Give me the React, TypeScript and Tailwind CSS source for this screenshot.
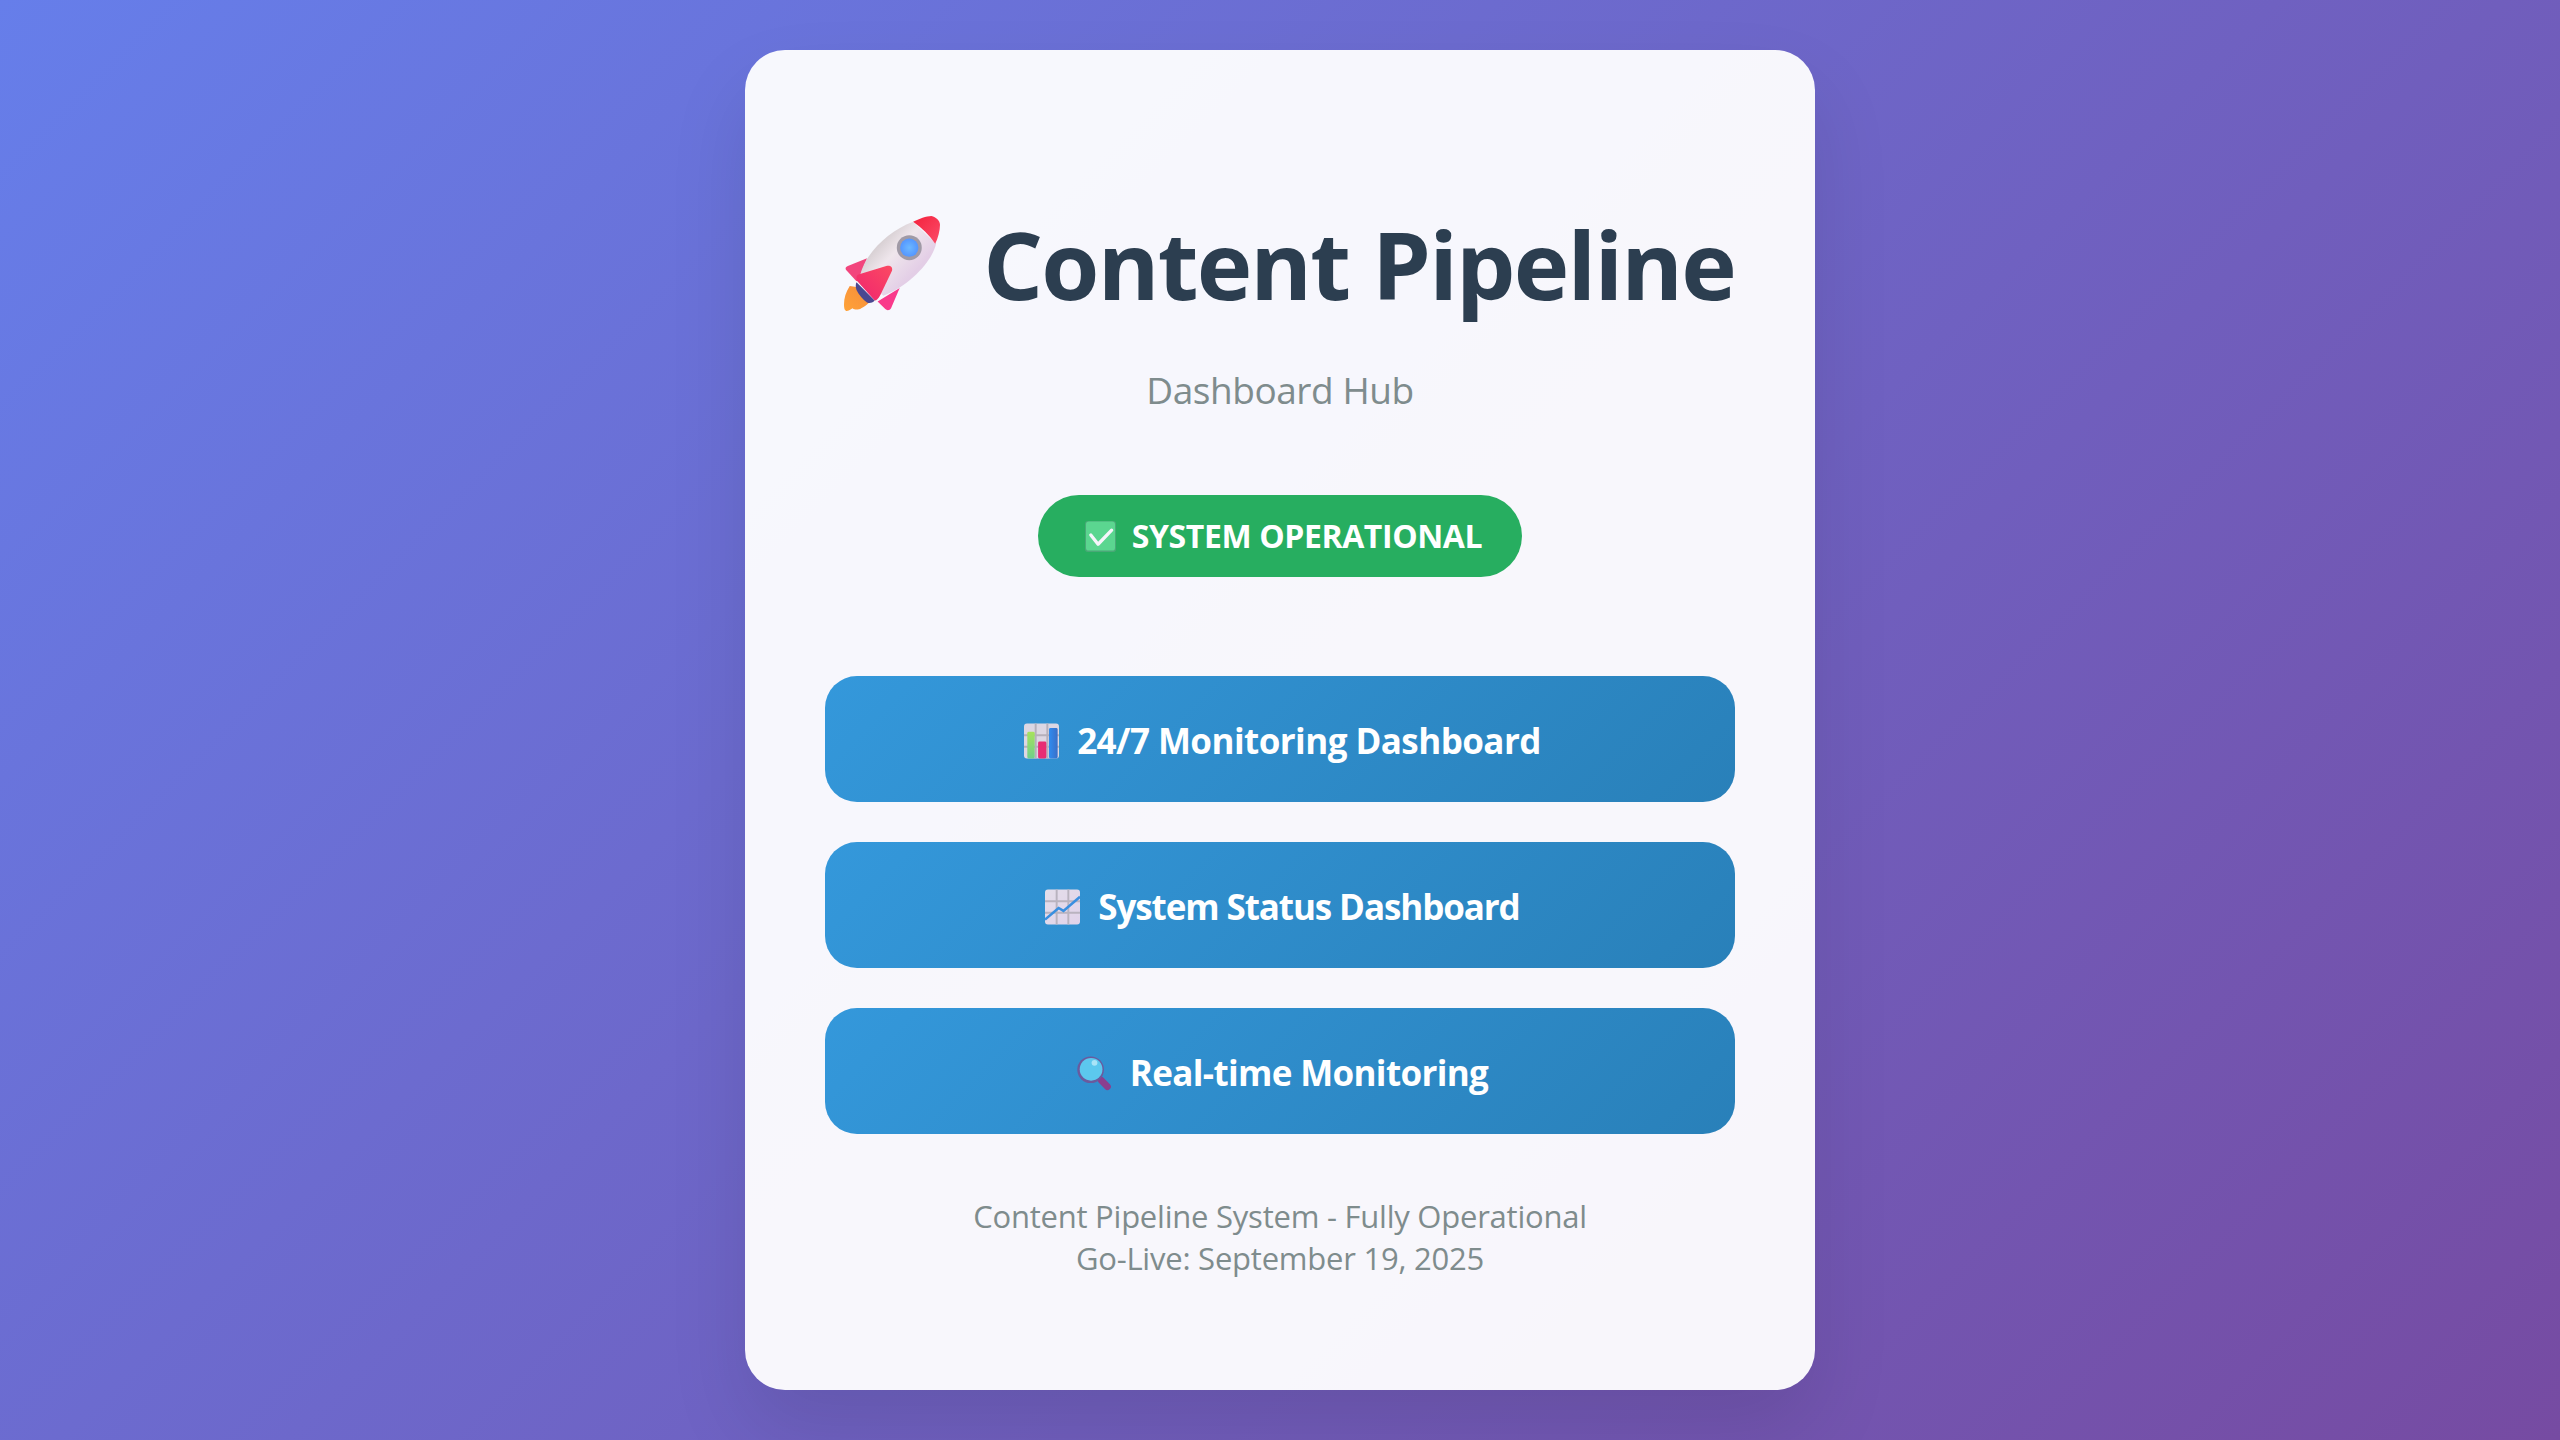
import React from 'react';

const font = "font-['Open_Sans','Noto_Sans',sans-serif]";

const Rocket = () => (
	<svg viewBox="0 0 100 100" className="w-[96px] h-[96px] shrink-0">
		<defs>
			<linearGradient id="rocketBody" x1="0.1" y1="0.25" x2="0.65" y2="0.75">
				<stop offset="0" stopColor="#c9c2c4" />
				<stop offset="0.5" stopColor="#efe6ec" />
				<stop offset="1" stopColor="#e3cee6" />
			</linearGradient>
			<linearGradient id="rocketTip" x1="0" y1="0" x2="1" y2="1">
				<stop offset="0" stopColor="#f4213c" />
				<stop offset="1" stopColor="#fb4d6a" />
			</linearGradient>
			<linearGradient id="rocketFin" x1="0" y1="1" x2="1" y2="0">
				<stop offset="0" stopColor="#f0246f" />
				<stop offset="1" stopColor="#fb4a62" />
			</linearGradient>
			<linearGradient id="rocketFlame" x1="0" y1="1" x2="1" y2="0">
				<stop offset="0" stopColor="#ffa338" />
				<stop offset="1" stopColor="#f58c3c" />
			</linearGradient>
			<radialGradient id="rocketGlass" cx="0.5" cy="0.5" r="0.6">
				<stop offset="0" stopColor="#6cb8ff" />
				<stop offset="1" stopColor="#4f8fff" />
			</radialGradient>
		</defs>
		<path d="M6 73C2 79 0 86 0 92C0 97 1 99 3 99C6 98 7 97 9 96C11 98 15 98 18 96C22 94 25 92 28 88L13 74Z" fill="url(#rocketFlame)" />
		<path d="M4 52L24 44L17 62L13 68L2 56C1 54 2 53 4 52Z" fill="#f2457d" />
		<path d="M58 75L49 96C48 98 45 99 43 97L35 89Z" fill="#f93a8b" />
		<path d="M13 69L32 88C29 91 26 91 24 90C20 87 16 83 13 77C12 74 12 71 13 69Z" fill="#4a4891" />
		<path d="M17 61C22 40 45 16 72 6L96 29C92 46 70 72 41 83Z" fill="url(#rocketBody)" />
		<path d="M72 6C78 3 86 0 91 0C96 1 100 5 100 9C100 15 98 23 95 29C89 20 81 12 72 6Z" fill="url(#rocketTip)" />
		<circle cx="68" cy="33" r="13" fill="#a09aa6" />
		<circle cx="68" cy="33" r="9.5" fill="url(#rocketGlass)" />
		<path d="M44 52C48 51 51 53 50 57L38 82C36 86 34 88 32 88L13 67C13 63 13 62 15 61Z" fill="url(#rocketFin)" />
	</svg>
);

const Check = () => (
	<svg viewBox="0 0 32 32" className="w-[31px] h-[31px] shrink-0">
		<rect x="0" y="0" width="32" height="32" rx="3" fill="#4aa877" />
		<rect x="1" y="0.5" width="30" height="30" rx="3" fill="#5bd690" />
		<path d="M6 14.5L13.5 24L27.5 9.5" fill="none" stroke="#f7f5fb" strokeWidth="3.4" strokeLinecap="round" strokeLinejoin="round" />
	</svg>
);

const BarChart = () => (
	<svg viewBox="0 0 36 36" className="w-[35px] h-[36px] shrink-0">
		<defs>
			<linearGradient id="barGreen" x1="0" y1="0" x2="0" y2="1">
				<stop offset="0" stopColor="#a7e25c" />
				<stop offset="1" stopColor="#6fd08a" />
			</linearGradient>
			<linearGradient id="barBlue" x1="0" y1="0" x2="1" y2="0">
				<stop offset="0" stopColor="#2f8cf0" />
				<stop offset="1" stopColor="#3a6fc8" />
			</linearGradient>
		</defs>
		<rect x="0" y="0" width="36" height="36" rx="3" fill="#dcd7e3" />
		<path d="M12 0V36M24 0V36M0 12H36M0 24H36" stroke="#b5b0bb" strokeWidth="2" />
		<rect x="3.4" y="8.4" width="7.6" height="27.6" rx="1.5" fill="url(#barGreen)" />
		<rect x="14.5" y="18.5" width="8.5" height="17.5" rx="1.5" fill="#e72d74" />
		<rect x="25.7" y="4.7" width="8.9" height="31.3" rx="1.5" fill="url(#barBlue)" />
	</svg>
);

const LineChart = () => (
	<svg viewBox="0 0 36 36" className="w-[35px] h-[36px] shrink-0">
		<defs>
			<linearGradient id="lineBg" x1="0" y1="0" x2="1" y2="1">
				<stop offset="0" stopColor="#e4deea" />
				<stop offset="1" stopColor="#e0d3ea" />
			</linearGradient>
		</defs>
		<rect x="0" y="0" width="36" height="36" rx="3" fill="url(#lineBg)" />
		<path d="M12 0V36M24 0V36M0 12H36M0 24H36" stroke="#b9b3bf" strokeWidth="2" />
		<path d="M0 31L14 19L19 22L36 7.5" fill="none" stroke="#3a8fe0" strokeWidth="2.6" />
	</svg>
);

const Magnifier = () => (
	<svg viewBox="0 0 36 36" className="w-[35px] h-[36px] shrink-0">
		<path d="M25 25.5L31.3 32" stroke="#8b3f8f" strokeWidth="7" strokeLinecap="round" />
		<circle cx="14" cy="14.7" r="13.7" fill="#6a5a9e" />
		<circle cx="14.5" cy="14.2" r="11.7" fill="#5cc8ee" />
		<circle cx="18" cy="7.5" r="3" fill="#a9e4f7" />
	</svg>
);

const links = [
	{ icon: <BarChart />, label: '24/7 Monitoring Dashboard', tracking: 'tracking-[-0.56px]' },
	{ icon: <LineChart />, label: 'System Status Dashboard', tracking: 'tracking-[-1.1px]' },
	{ icon: <Magnifier />, label: 'Real-time Monitoring', tracking: 'tracking-[-0.65px]' },
];

const App = () => {
	return (
		<div className={`${font} h-[1440px] flex items-center justify-center bg-[linear-gradient(135deg,#667eea_0%,#764ba2_100%)]`}>
			<div className="w-[1070px] h-[1340px] px-20 pt-[149px] rounded-[40px] bg-white/95 text-center shadow-[0_40px_80px_rgba(0,0,0,0.1)]">
				<h1 className="flex items-center justify-between pl-[19px] h-[130px] text-[94px] leading-[130px] tracking-[-1.8px] font-bold text-[#2c3e50] whitespace-nowrap">
					<Rocket />
					Content Pipeline
				</h1>
				<p className="mt-[35px] text-[37px] leading-[52px] tracking-[-0.45px] text-[#7f8c8d]">Dashboard Hub</p>
				<div className="mt-[79px] flex justify-center">
					<div className="flex items-center gap-[16px] h-[82px] pl-[47px] pr-[40px] rounded-full bg-[#27ae60] text-[32px] tracking-[-0.4px] font-bold text-white whitespace-nowrap">
						<Check />
						SYSTEM OPERATIONAL
					</div>
				</div>
				<div className="mt-[99px] flex flex-col gap-[40px]">
					{links.map((link) => (
						<a key={link.label} href="#" className={`flex items-center justify-center gap-[18px] h-[126px] pl-[5px] pt-[4px] rounded-[32px] bg-[linear-gradient(135deg,#3498db,#2980b9)] text-[35px] font-bold text-white whitespace-nowrap ${link.tracking}`}>
							{link.icon}
							{link.label}
						</a>
					))}
				</div>
				<p className="mt-[61px] text-[31px] leading-[42px] tracking-[-0.23px] text-[#7f8c8d]">
					Content Pipeline System - Fully Operational
					<br />
					Go-Live: September 19, 2025
				</p>
			</div>
		</div>
	);
};

export default App;
